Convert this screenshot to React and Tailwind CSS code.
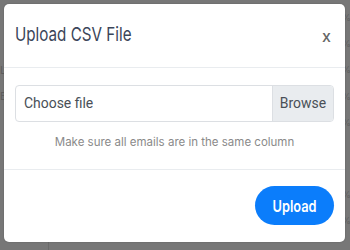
export default function App() {
  const pct = [18, 44, 70, 97, 123, 195, 221];
  return (
    <div className="relative w-[350px] h-[250px] overflow-hidden bg-[#777777]" style={{ fontFamily: "Inter, 'Noto Sans', sans-serif" }}>
      {pct.map((y) => (
        <span key={y} className="absolute left-[342px] text-[9px] leading-none text-[#5e5e5e]" style={{ top: y - 5 }}>%</span>
      ))}
      <span className="absolute left-0 top-[65px] text-[11px] leading-none text-[#5e5e5e]">L</span>
      <span className="absolute left-0 top-[91px] text-[11px] leading-none text-[#5e5e5e]">B</span>
      <div className="absolute left-[48px] top-[242px] w-px h-[8px] bg-[#6a6a6a]" />
      <div className="absolute left-[4px] top-[4px] w-[341px] h-[238px] bg-white rounded-[5px] flex flex-col shadow-[0_0_2px_rgba(0,0,0,0.2)]">
        <div className="h-[64px] flex items-center justify-between px-[11px] border-b border-[#e9ecef]">
          <span className="inline-block origin-left scale-x-[0.8] text-[19px] text-[#3b4559] whitespace-nowrap">Upload CSV File</span>
          <span className="text-[16px] font-medium text-[#666] mr-[3px]">x</span>
        </div>
        <div className="h-[102px] flex flex-col px-[11px] pt-[17px] border-b border-[#e9ecef]">
          <div className="h-[37px] flex border border-[#dcdfe3] rounded-[4px] overflow-hidden" style={{ fontFamily: "Roboto, sans-serif" }}>
            <div className="flex-1 flex items-center pl-[8px] text-[15px] text-[#495057]">
              <span className="inline-block origin-left scale-x-[0.93]">Choose file</span>
            </div>
            <div className="w-[61px] flex items-center justify-center bg-[#e9ecef] border-l border-[#dcdfe3] text-[15px] text-[#495057]">
              <span className="inline-block scale-x-[0.93]">Browse</span>
            </div>
          </div>
          <div className="mt-[12px] text-center text-[11.5px] text-[#8a8a8a]">Make sure all emails are in the same column</div>
        </div>
        <div className="flex-1 flex justify-end items-start pt-[16px] px-[11px]">
          <button className="w-[79px] h-[39px] rounded-full bg-[#0b7dfb] text-white text-[16px] font-semibold">
            <span className="inline-block scale-x-[0.8]">Upload</span>
          </button>
        </div>
      </div>
    </div>
  );
}
